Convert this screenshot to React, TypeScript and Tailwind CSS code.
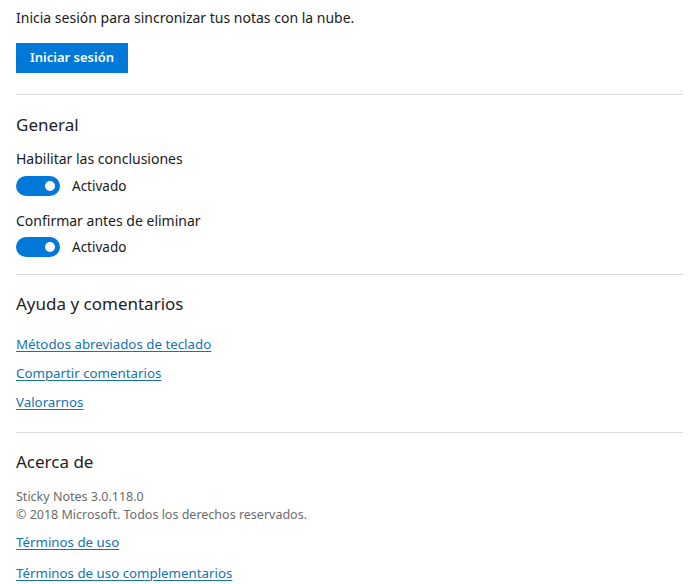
import React, { useState } from 'react';

const font = { fontFamily: '"Segoe UI", "Noto Sans", sans-serif' };

const Toggle: React.FC<{ on: boolean; onChange: () => void }> = ({ on, onChange }) => (
  <button
    onClick={onChange}
    className="flex items-center gap-3 h-5"
  >
    <span
      className={`relative w-11 h-5 rounded-full flex items-center ${on ? 'bg-[#0078d7] justify-end' : 'bg-white border-2 border-[#333] justify-start'}`}
    >
      <span className={`w-[10px] h-[10px] rounded-full mx-[5px] ${on ? 'bg-white' : 'bg-[#333]'}`}></span>
    </span>
    <span className="text-[13.5px] text-[#1a1a1a]">{on ? 'Activado' : 'Desactivado'}</span>
  </button>
);

const Divider = () => <div className="h-px bg-[#dcdcdc] mr-[11px]"></div>;

const Link: React.FC<{ children: React.ReactNode }> = ({ children }) => (
  <a href="#" className="text-[13.3px] text-[#1572b3] underline underline-offset-2 decoration-1 w-fit">
    {children}
  </a>
);

export default function App() {
  const [insights, setInsights] = useState(true);
  const [confirmDelete, setConfirmDelete] = useState(true);

  return (
    <div className="w-[694px] h-[584px] bg-white overflow-hidden pl-4 text-[#1a1a1a]" style={font}>
      {/* Sign in */}
      <div className="pt-[8px] pb-[21px]">
        <p className="text-[14px] leading-5">Inicia sesión para sincronizar tus notas con la nube.</p>
        <button className="mt-[15px] h-[30px] w-[112px] bg-[#0078d7] text-white text-[13px] font-semibold">
          Iniciar sesión
        </button>
      </div>
      <Divider />

      {/* General */}
      <div className="pt-[18px] pb-[17px]">
        <h2 className="text-[17px] leading-6 text-[#222]">General</h2>
        <p className="mt-[12px] text-[14px] leading-5">Habilitar las conclusiones</p>
        <div className="mt-[7px]">
          <Toggle on={insights} onChange={() => setInsights(!insights)} />
        </div>
        <p className="mt-[15px] text-[14px] leading-5">Confirmar antes de eliminar</p>
        <div className="mt-[6px]">
          <Toggle on={confirmDelete} onChange={() => setConfirmDelete(!confirmDelete)} />
        </div>
      </div>
      <Divider />

      {/* Help */}
      <div className="pt-[17px] pb-[20px]">
        <h2 className="text-[17px] leading-6 text-[#222]">Ayuda y comentarios</h2>
        <div className="mt-[18px] flex flex-col gap-[9px] leading-5">
          <Link>Métodos abreviados de teclado</Link>
          <Link>Compartir comentarios</Link>
          <Link>Valorarnos</Link>
        </div>
      </div>
      <Divider />

      {/* About */}
      <div className="pt-[17px]">
        <h2 className="text-[17px] leading-6 text-[#222]">Acerca de</h2>
        <div className="mt-[14px] text-[12.5px] leading-[18px] text-[#6b6b6b]">
          <p>Sticky Notes 3.0.118.0</p>
          <p>© 2018 Microsoft. Todos los derechos reservados.</p>
        </div>
        <div className="mt-[8px] flex flex-col gap-[11px] leading-5">
          <Link>Términos de uso</Link>
          <Link>Términos de uso complementarios</Link>
        </div>
      </div>
    </div>
  );
}
